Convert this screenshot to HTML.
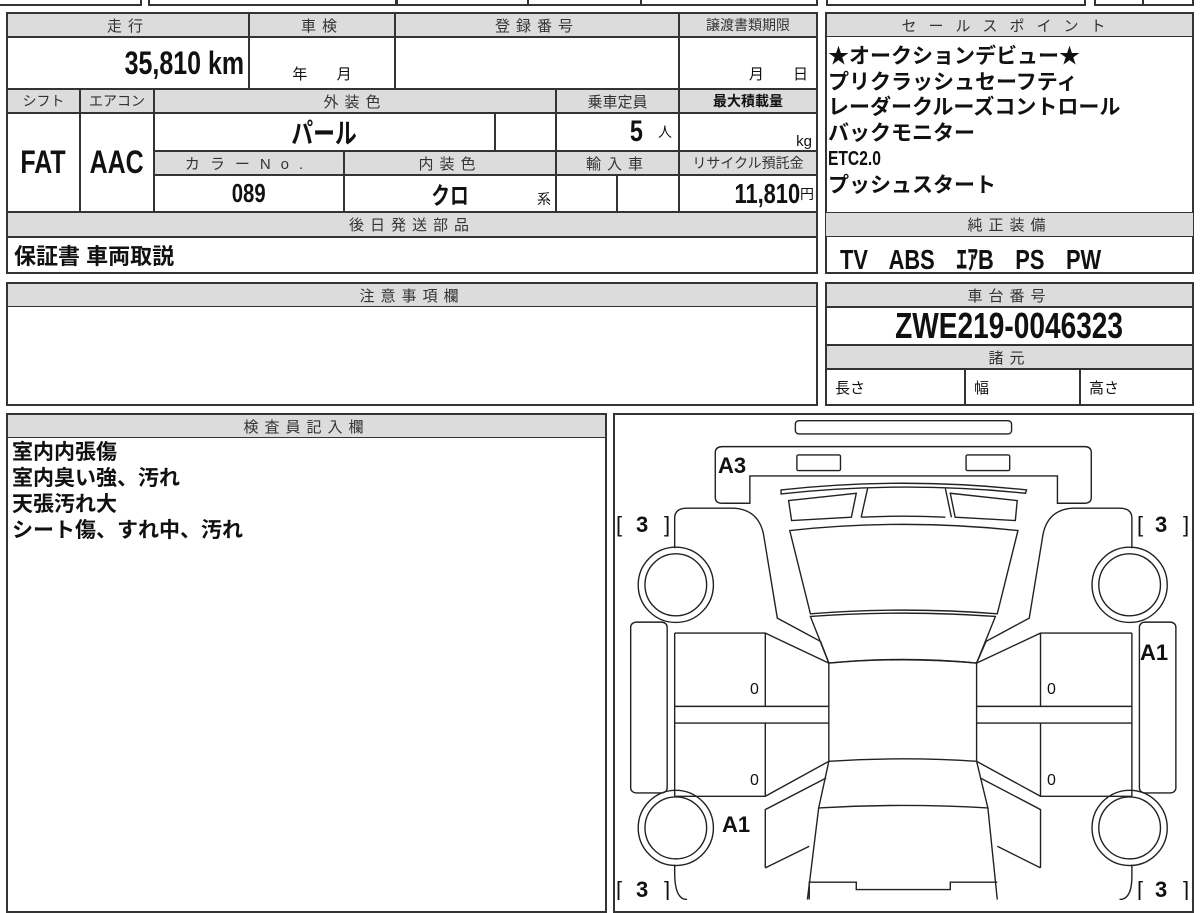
<!DOCTYPE html>
<html><head><meta charset="utf-8"><style>
*{margin:0;padding:0;box-sizing:border-box}
body{width:1200px;height:900px;background:#fff;position:relative;overflow:hidden;font-family:"Liberation Sans","Noto Sans CJK JP",sans-serif;color:#111}
.b{position:absolute;border:2px solid #333}
.c{position:absolute;border:1px solid #333;display:flex;align-items:center;justify-content:center;overflow:hidden;white-space:nowrap}
.h{background:#dcdcdc;font-size:15px;letter-spacing:6px;color:#333}
.n{display:inline-block;transform:scaleX(0.78);font-weight:bold}
.t{position:absolute;font-weight:bold;white-space:nowrap}
</style></head><body>
<div class="b" style="left:-2px;top:-10px;width:144px;height:16px"></div>
<div class="b" style="left:148px;top:-10px;width:250px;height:16px"></div>
<div class="b" style="left:395px;top:-10px;width:134px;height:16px"></div>
<div class="b" style="left:527px;top:-10px;width:115px;height:16px"></div>
<div class="b" style="left:640px;top:-10px;width:178px;height:16px"></div>
<div class="b" style="left:826px;top:-10px;width:260px;height:16px"></div>
<div class="b" style="left:1094px;top:-10px;width:50px;height:16px"></div>
<div class="b" style="left:1142px;top:-10px;width:52px;height:16px"></div>

<div class="b" style="left:6px;top:12px;width:812px;height:262px"></div>
<div class="c h" style="left:7px;top:13px;width:242px;height:24px">走行</div>
<div class="c h" style="left:249px;top:13px;width:146px;height:24px">車検</div>
<div class="c h" style="left:395px;top:13px;width:284px;height:24px">登録番号</div>
<div class="c h" style="left:679px;top:13px;width:138px;height:24px;letter-spacing:0;font-size:14px">譲渡書類期限</div>
<div class="c" style="left:7px;top:37px;width:242px;height:52px;justify-content:flex-end;padding-right:4px"><span class="n" style="font-size:32px;transform-origin:right">35,810 km</span></div>
<div class="c" style="left:249px;top:37px;width:146px;height:52px;align-items:flex-end;padding-bottom:4px;font-size:15px">年&nbsp;&nbsp;&nbsp;&nbsp;&nbsp;&nbsp;&nbsp;月</div>
<div class="c" style="left:395px;top:37px;width:284px;height:52px"></div>
<div class="c" style="left:679px;top:37px;width:138px;height:52px;align-items:flex-end;padding-bottom:4px;font-size:15px;justify-content:flex-end;padding-right:8px">月&nbsp;&nbsp;&nbsp;&nbsp;&nbsp;&nbsp;&nbsp;日</div>
<div class="c h" style="left:7px;top:89px;width:73px;height:24px;letter-spacing:0;font-size:14px">シフト</div>
<div class="c h" style="left:80px;top:89px;width:74px;height:24px;letter-spacing:0;font-size:14px">エアコン</div>
<div class="c h" style="left:154px;top:89px;width:402px;height:24px">外装色</div>
<div class="c h" style="left:556px;top:89px;width:123px;height:24px;letter-spacing:0">乗車定員</div>
<div class="c h" style="left:679px;top:89px;width:138px;height:24px;letter-spacing:0;font-size:14px;color:#111;font-weight:bold">最大積載量</div>
<div class="c" style="left:7px;top:113px;width:73px;height:99px"><span class="n" style="font-size:32px">FAT</span></div>
<div class="c" style="left:80px;top:113px;width:74px;height:99px"><span class="n" style="font-size:32px">AAC</span></div>
<div class="c" style="left:154px;top:113px;width:341px;height:38px"><span class="n" style="font-size:28px">パール</span></div>
<div class="c" style="left:495px;top:113px;width:61px;height:38px"></div>
<div class="c" style="left:556px;top:113px;width:123px;height:38px;justify-content:flex-end;padding-right:6px"><span class="n" style="font-size:30px">5</span>&nbsp;&nbsp;&nbsp;<span style="font-size:14px">人</span></div>
<div class="c" style="left:679px;top:113px;width:138px;height:38px;justify-content:flex-end;padding-right:4px;align-items:flex-end;font-size:15px">kg</div>
<div class="c h" style="left:154px;top:151px;width:190px;height:24px;letter-spacing:10px">カラーNo.</div>
<div class="c h" style="left:344px;top:151px;width:212px;height:24px">内装色</div>
<div class="c h" style="left:556px;top:151px;width:123px;height:24px">輸入車</div>
<div class="c h" style="left:679px;top:151px;width:138px;height:24px;letter-spacing:0;font-size:14px">リサイクル預託金</div>
<div class="c" style="left:154px;top:175px;width:190px;height:37px"><span class="n" style="font-size:26px">089</span></div>
<div class="c" style="left:344px;top:175px;width:212px;height:37px"><span class="n" style="font-size:24px">クロ</span><span style="position:absolute;right:4px;bottom:2px;font-size:14px">系</span></div>
<div class="c" style="left:556px;top:175px;width:61px;height:37px"></div>
<div class="c" style="left:617px;top:175px;width:62px;height:37px"></div>
<div class="c" style="left:679px;top:175px;width:138px;height:37px;justify-content:flex-end;padding-right:2px"><span class="n" style="font-size:28px;transform-origin:right">11,810</span><span style="font-size:14px">円</span></div>
<div class="c h" style="left:7px;top:212px;width:810px;height:25px">後日発送部品</div>
<div class="c" style="left:7px;top:237px;width:810px;height:36px;justify-content:flex-start;padding-left:6px;font-weight:bold;font-size:22px">保証書 車両取説</div>

<div class="b" style="left:825px;top:12px;width:369px;height:262px"></div>
<div class="c h" style="left:826px;top:13px;width:367px;height:24px;letter-spacing:12px">セールスポイント</div>
<div class="t" style="left:828px;top:44px;font-size:21px;line-height:25.5px">★オークションデビュー★<br>プリクラッシュセーフティ<br>レーダークルーズコントロール<br>バックモニター<br><span class="n" style="font-size:20px;transform-origin:left">ETC2.0</span><br>プッシュスタート</div>
<div class="c h" style="left:826px;top:212px;width:367px;height:25px;border-top:1px solid #333;border-bottom:1px solid #333;border-left:0;border-right:0">純正装備</div>
<div class="t" style="left:840px;top:238px;font-size:28px"><span class="n" style="transform-origin:left;word-spacing:6px">TV&nbsp; ABS&nbsp; ｴｱB&nbsp; PS&nbsp; PW</span></div>

<div class="b" style="left:6px;top:282px;width:812px;height:124px"></div>
<div class="c h" style="left:7px;top:283px;width:810px;height:24px">注意事項欄</div>

<div class="b" style="left:825px;top:282px;width:369px;height:124px"></div>
<div class="c h" style="left:826px;top:283px;width:367px;height:24px">車台番号</div>
<div class="c" style="left:826px;top:307px;width:367px;height:38px"><span class="n" style="font-size:36px">ZWE219-0046323</span></div>
<div class="c h" style="left:826px;top:345px;width:367px;height:24px">諸元</div>
<div class="c" style="left:826px;top:369px;width:139px;height:36px;justify-content:flex-start;padding-left:8px;font-size:15px">長さ</div>
<div class="c" style="left:965px;top:369px;width:115px;height:36px;justify-content:flex-start;padding-left:8px;font-size:15px">幅</div>
<div class="c" style="left:1080px;top:369px;width:113px;height:36px;justify-content:flex-start;padding-left:8px;font-size:15px">高さ</div>

<div class="b" style="left:6px;top:413px;width:601px;height:500px"></div>
<div class="c h" style="left:7px;top:414px;width:599px;height:24px">検査員記入欄</div>
<div class="t" style="left:12px;top:440px;font-size:21px;line-height:26px">室内内張傷<br>室内臭い強、汚れ<br>天張汚れ大<br>シート傷、すれ中、汚れ</div>

<div class="b" style="left:613px;top:413px;width:581px;height:500px"></div>
<svg style="position:absolute;left:0;top:0" width="1200" height="900">
<g transform="translate(610,410) scale(0.376,0.333)" fill="none" stroke="#222" stroke-width="4" vector-effect="non-scaling-stroke">
<g stroke-width="1.4" vector-effect="non-scaling-stroke">
<rect x="493" y="32" width="575" height="40" rx="10" vector-effect="non-scaling-stroke"/>
<path vector-effect="non-scaling-stroke" d="M300,110 H1262 Q1280,110 1280,128 V262 Q1280,280 1262,280 H1190 V198 H372 V280 H298 Q280,280 280,262 V128 Q280,110 300,110Z"/>
<rect vector-effect="non-scaling-stroke" x="497" y="135" width="116" height="47" rx="4"/>
<rect vector-effect="non-scaling-stroke" x="947" y="135" width="116" height="47" rx="4"/>
<path vector-effect="non-scaling-stroke" d="M455,240 Q780,200 1108,240 L1105,250 Q780,212 455,252Z"/>
<path vector-effect="non-scaling-stroke" d="M475,272 L655,250 L642,322 L483,332Z"/>
<path vector-effect="non-scaling-stroke" d="M905,250 L1083,272 L1078,332 L918,322Z"/>
<path vector-effect="non-scaling-stroke" d="M668,322 L685,236 M892,236 L908,322 M668,322 Q780,316 892,322"/>
<path vector-effect="non-scaling-stroke" d="M478,362 Q780,325 1085,362 L1030,612 Q780,590 533,612Z"/>
<path vector-effect="non-scaling-stroke" d="M533,620 Q780,600 1025,620 L975,760 Q780,738 582,760Z"/>
<path vector-effect="non-scaling-stroke" d="M582,760 Q780,740 975,760 V1055 Q780,1040 582,1055Z"/>
<path vector-effect="non-scaling-stroke" d="M582,1055 L555,1195 Q780,1180 1005,1195 L975,1055"/>
<path vector-effect="non-scaling-stroke" d="M555,1195 L525,1470 M1005,1195 L1030,1470"/>
<path vector-effect="non-scaling-stroke" d="M530,1470 V1418 H655 V1440 H905 V1418 H1030"/>
<path vector-effect="non-scaling-stroke" d="M172,415 V325 Q172,295 205,295 H330 Q400,300 410,385 L445,625 L560,695 L582,760"/>
<path vector-effect="non-scaling-stroke" d="M1388,415 V325 Q1388,295 1355,295 H1230 Q1160,300 1150,385 L1115,625 L1000,695 L975,760"/>
<path vector-effect="non-scaling-stroke" d="M172,1365 V1390 Q172,1470 205,1470 M1388,1365 V1400 Q1388,1470 1355,1470"/>
<ellipse vector-effect="non-scaling-stroke" cx="175" cy="525" rx="100" ry="113"/><ellipse vector-effect="non-scaling-stroke" cx="175" cy="525" rx="82" ry="93"/>
<ellipse vector-effect="non-scaling-stroke" cx="1382" cy="525" rx="100" ry="113"/><ellipse vector-effect="non-scaling-stroke" cx="1382" cy="525" rx="82" ry="93"/>
<ellipse vector-effect="non-scaling-stroke" cx="175" cy="1255" rx="100" ry="113"/><ellipse vector-effect="non-scaling-stroke" cx="175" cy="1255" rx="82" ry="93"/>
<ellipse vector-effect="non-scaling-stroke" cx="1382" cy="1255" rx="100" ry="113"/><ellipse vector-effect="non-scaling-stroke" cx="1382" cy="1255" rx="82" ry="93"/>
<rect vector-effect="non-scaling-stroke" x="55" y="637" width="97" height="513" rx="15"/>
<rect vector-effect="non-scaling-stroke" x="1408" y="637" width="97" height="513" rx="15"/>
<path vector-effect="non-scaling-stroke" d="M172,670 H413 L582,760 M172,890 H582 M172,940 H582 M172,1160 H413 L582,1055 M172,670 V1160 M413,670 V890 M413,940 V1160"/>
<path vector-effect="non-scaling-stroke" d="M1388,670 H1145 L975,760 M1388,890 H975 M1388,940 H975 M1388,1160 H1145 L975,1055 M1388,670 V1160 M1145,670 V890 M1145,940 V1160"/>
<path vector-effect="non-scaling-stroke" d="M413,1375 V1200 L575,1105 M413,1375 L530,1310 M1145,1375 V1200 L985,1105 M1145,1375 L1030,1310"/>
</g>
</g>
<g font-family="Liberation Sans, sans-serif" font-weight="bold" fill="#111">
<text x="718" y="473" font-size="22">A3</text>
<text x="1140" y="660" font-size="22">A1</text>
<text x="722" y="832" font-size="22">A1</text>
<text x="750" y="694" font-size="16" font-weight="normal">0</text>
<text x="750" y="785" font-size="16" font-weight="normal">0</text>
<text x="1047" y="694" font-size="16" font-weight="normal">0</text>
<text x="1047" y="785" font-size="16" font-weight="normal">0</text>
<g font-size="22">
<text x="616" y="532" font-weight="normal">[</text><text x="636" y="532">3</text><text x="664" y="532" font-weight="normal">]</text>
<text x="1137" y="532" font-weight="normal">[</text><text x="1155" y="532">3</text><text x="1183" y="532" font-weight="normal">]</text>
<text x="616" y="897" font-weight="normal">[</text><text x="636" y="897">3</text><text x="664" y="897" font-weight="normal">]</text>
<text x="1137" y="897" font-weight="normal">[</text><text x="1155" y="897">3</text><text x="1183" y="897" font-weight="normal">]</text>
</g>
</g>
</svg>
</body></html>
